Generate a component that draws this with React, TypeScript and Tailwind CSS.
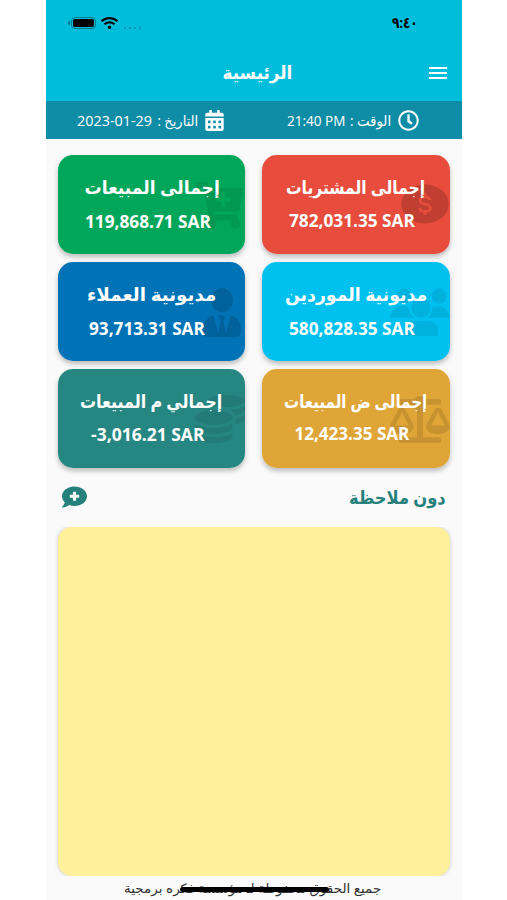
import React from 'react';
import type { IconType } from 'react-icons';
import {
  FaBalanceScale,
  FaCalendarAlt,
  FaCartPlus,
  FaCoins,
  FaCommentMedical,
  FaRegClock,
  FaUserTie,
  FaWifi,
} from 'react-icons/fa';

type FitTextProps = {
  width: number;
  dir?: 'rtl' | 'ltr';
  className?: string;
  children: React.ReactNode;
};

// Shrinks or stretches one line of text to the given width
const FitText: React.FC<FitTextProps> = ({
  width,
  dir = 'rtl',
  className = '',
  children,
}) => {
  const ref = React.useRef<HTMLSpanElement>(null);
  const [scale, setScale] = React.useState(1);

  React.useLayoutEffect(() => {
    if (ref.current) {
      setScale(width / ref.current.offsetWidth);
    }
  }, [width]);

  return (
    <div className="flex shrink-0 justify-center" style={{ width }}>
      <span
        ref={ref}
        dir={dir}
        className={`inline-block shrink-0 whitespace-nowrap ${className}`}
        style={{ transform: `scaleX(${scale})` }}
      >
        {children}
      </span>
    </div>
  );
};

const DollarIcon = () => (
  <svg viewBox="0 0 48 40" className="h-10 w-12" fill="none">
    <ellipse cx="24" cy="20" rx="23.7" ry="19.5" fill="#000" opacity="0.17" />
    <path
      d="M29 16c-.5-2-2.500-3-5-3-3 0-5 1.500-5 3.500 0 5 10.500 2.500 10.500 7.500 0 2.500-2.500 3.500-5.500 3.500s-5-1-5.500-3.500M24 9v4M24 27v4"
      stroke="#e74c3c"
      strokeWidth="2.8"
    />
  </svg>
);

const GroupIcon = () => (
  <svg viewBox="0 0 60 50" className="h-[50px] w-[60px]" fill="#000" opacity="0.07">
    <circle cx="14" cy="8" r="7.500" />
    <circle cx="49" cy="8" r="7.500" />
    <circle cx="31" cy="20" r="9.500" />
    <path d="M0 30q2-12 13-12 5 0 6 3 1 5 5 9zM60 30q-2-12-13-12-4 0-5 3 0 5-4 9zM14 48v-4q0-11 11-11h12q11 0 11 11v4z" />
  </svg>
);

const faded = (Icon: IconType, className: string) => (
  <Icon className={className} preserveAspectRatio="none" />
);

type Stat = {
  title: string;
  titleWidth: number;
  amount: string;
  amountWidth: number;
  color: string;
  icon: React.ReactNode;
  iconPos: string;
  titlePad?: string;
  amountPad: string;
  gap: string;
};

const stats: Stat[] = [
  {
    title: 'إجمالى المشتريات',
    titleWidth: 139,
    amount: '782,031.35 SAR',
    amountWidth: 126,
    color: 'bg-[#e74c3c]',
    icon: <DollarIcon />,
    iconPos: 'right-[1px] top-[29px]',
    amountPad: 'pr-2',
    gap: 'gap-[9px]',
  },
  {
    title: 'إجمالى المبيعات',
    titleWidth: 135,
    amount: '119,868.71 SAR',
    amountWidth: 126,
    color: 'bg-[#00a65a]',
    icon: faded(FaCartPlus, 'h-[47px] w-[47px] text-black opacity-[0.08]'),
    iconPos: 'right-[2px] top-[27px]',
    titlePad: 'pl-px',
    amountPad: 'pr-[7px]',
    gap: 'gap-[10px]',
  },
  {
    title: 'مديونية الموردين',
    titleWidth: 142,
    amount: '580,828.35 SAR',
    amountWidth: 126,
    color: 'bg-[#00c0ef]',
    icon: <GroupIcon />,
    iconPos: 'right-0 top-[26px]',
    amountPad: 'pr-2',
    gap: 'gap-[10px]',
  },
  {
    title: 'مديونية العملاء',
    titleWidth: 129,
    amount: '93,713.31 SAR',
    amountWidth: 116,
    color: 'bg-[#0073b7]',
    icon: faded(FaUserTie, 'h-[49px] w-[38px] text-black opacity-15'),
    iconPos: 'right-[4px] top-[26px]',
    amountPad: 'pr-2',
    gap: 'gap-[10px]',
  },
  {
    title: 'إجمالى ض المبيعات',
    titleWidth: 143,
    amount: '12,423.35 SAR',
    amountWidth: 115,
    color: 'bg-[#dfa537]',
    icon: faded(FaBalanceScale, 'h-[47px] w-[60px] text-black opacity-10'),
    iconPos: 'right-0 top-[27px]',
    amountPad: 'pr-2',
    gap: 'gap-[8px]',
  },
  {
    title: 'إجمالي م المبيعات',
    titleWidth: 142,
    amount: '-3,016.21 SAR',
    amountWidth: 113,
    color: 'bg-[#268782]',
    icon: faded(FaCoins, 'h-[48px] w-[50px] text-black opacity-[0.08]'),
    iconPos: 'right-0 top-[26px]',
    amountPad: 'pr-[7px]',
    gap: 'gap-[9px]',
  },
];

const StatCard: React.FC<{ stat: Stat }> = ({ stat }) => (
  <div
    className={`relative flex h-[99px] flex-col items-center overflow-hidden rounded-[15px] pt-5 text-white ${stat.color}`}
  >
    <div className={`absolute ${stat.iconPos}`}>{stat.icon}</div>
    <div className={`relative flex flex-col items-center ${stat.gap}`}>
      <div className={stat.titlePad}>
        <FitText
          width={stat.titleWidth}
          className="text-[18px] leading-6 font-bold"
        >
          {stat.title}
        </FitText>
      </div>
      <div className={stat.amountPad}>
        <FitText
          width={stat.amountWidth}
          dir="ltr"
          className="text-[17.5px] leading-6 font-bold"
        >
          {stat.amount}
        </FitText>
      </div>
    </div>
  </div>
);

const App: React.FC = () => {
  return (
    <div className="flex h-[900px] w-[507px] justify-center overflow-hidden bg-white font-['Open_Sans','Noto_Sans','DejaVu_Sans',sans-serif]">
      <div className="flex w-[416px] flex-col bg-[#fafafa]">
        {/* Header */}
        <div className="h-[101px] bg-[#00bddb]">
          <div className="flex h-[46px] items-center justify-between pr-[44px] pl-[22px] text-black">
            <div className="flex items-center">
              <span className="h-1 w-0.5 rounded-l bg-black/40"></span>
              <span className="ml-px flex h-[12px] w-[25px] rounded-[4px] border border-black/35 p-px">
                <span className="flex-1 rounded-[2px] bg-black"></span>
              </span>
              <FaWifi className="ml-[5px] h-[14px] w-[17px]" />
              <span className="mt-2.5 ml-[6px] flex gap-[3px]">
                {[0, 1, 2, 3].map((n) => (
                  <span key={n} className="size-[2px] rounded-full bg-black/25"></span>
                ))}
              </span>
            </div>
            <FitText width={26} className="mt-[-2px] text-[15px] font-bold">
              ٩:٤٠
            </FitText>
          </div>
          <div className="flex h-[54px] items-center justify-between pr-[15px] pl-[177px] text-white">
            <FitText width={70} className="mt-[-2px] text-[18px] font-bold">
              الرئيسية
            </FitText>
            <div className="flex flex-col gap-[3px]">
              <span className="h-[2px] w-[18px] bg-white"></span>
              <span className="h-[2px] w-[18px] bg-white"></span>
              <span className="h-[2px] w-[18px] bg-white"></span>
            </div>
          </div>
        </div>

        {/* Date and time */}
        <div className="flex h-[38px] shrink-0 items-center justify-between bg-[#108da6] pr-[43px] pl-[32px] text-white">
          <div className="flex items-center gap-[6px]">
            <div className="flex items-center gap-[5px]">
              <FitText width={75} dir="ltr" className="text-[14px]">
                2023-01-29
              </FitText>
              <FitText width={41} className="text-[14px]">
                التاريخ :
              </FitText>
            </div>
            <FaCalendarAlt className="h-[21px] w-[19px]" />
          </div>
          <div className="flex items-center gap-[6px]">
            <div className="flex items-center gap-[5px]">
              <FitText width={58} dir="ltr" className="text-[14px]">
                21:40 PM
              </FitText>
              <FitText width={41} className="text-[14px]">
                الوقت :
              </FitText>
            </div>
            <FaRegClock className="size-[21px]" />
          </div>
        </div>

        {/* Totals */}
        <div
          dir="rtl"
          className="mx-3 mt-4 grid grid-cols-2 gap-x-[17px] gap-y-2"
        >
          {stats.map((stat) => (
            <div
              key={stat.title}
              className="rounded-[15px] shadow-[0_3px_5px_rgba(0,0,0,0.25)]"
            >
              <StatCard stat={stat} />
            </div>
          ))}
        </div>

        {/* Notes */}
        <div className="flex h-[59px] items-center justify-between pr-[16px] pb-px pl-4 text-[#26807b]">
          <FaCommentMedical className="h-[24px] w-[25px]" preserveAspectRatio="none" />
          <FitText width={97} className="text-[18px] font-bold">
            دون ملاحظة
          </FitText>
        </div>
        <div className="h-[349px] overflow-hidden px-3">
          <div className="h-[349px] rounded-[14px] bg-[#fff09c] shadow-[0_0_4px_rgba(0,0,0,0.2)]"></div>
        </div>

        {/* Footer */}
        <div className="relative flex h-6 items-center justify-center pt-px pr-[2px] text-[#333]">
          <FitText width={257} className="text-[13px]">
            جميع الحقوق محفوظة لـ مؤسسة فكره برمجية
          </FitText>
          <span className="absolute top-[11px] left-[134px] h-[5px] w-[149px] rounded-full bg-black"></span>
        </div>
      </div>
    </div>
  );
};

export default App;
